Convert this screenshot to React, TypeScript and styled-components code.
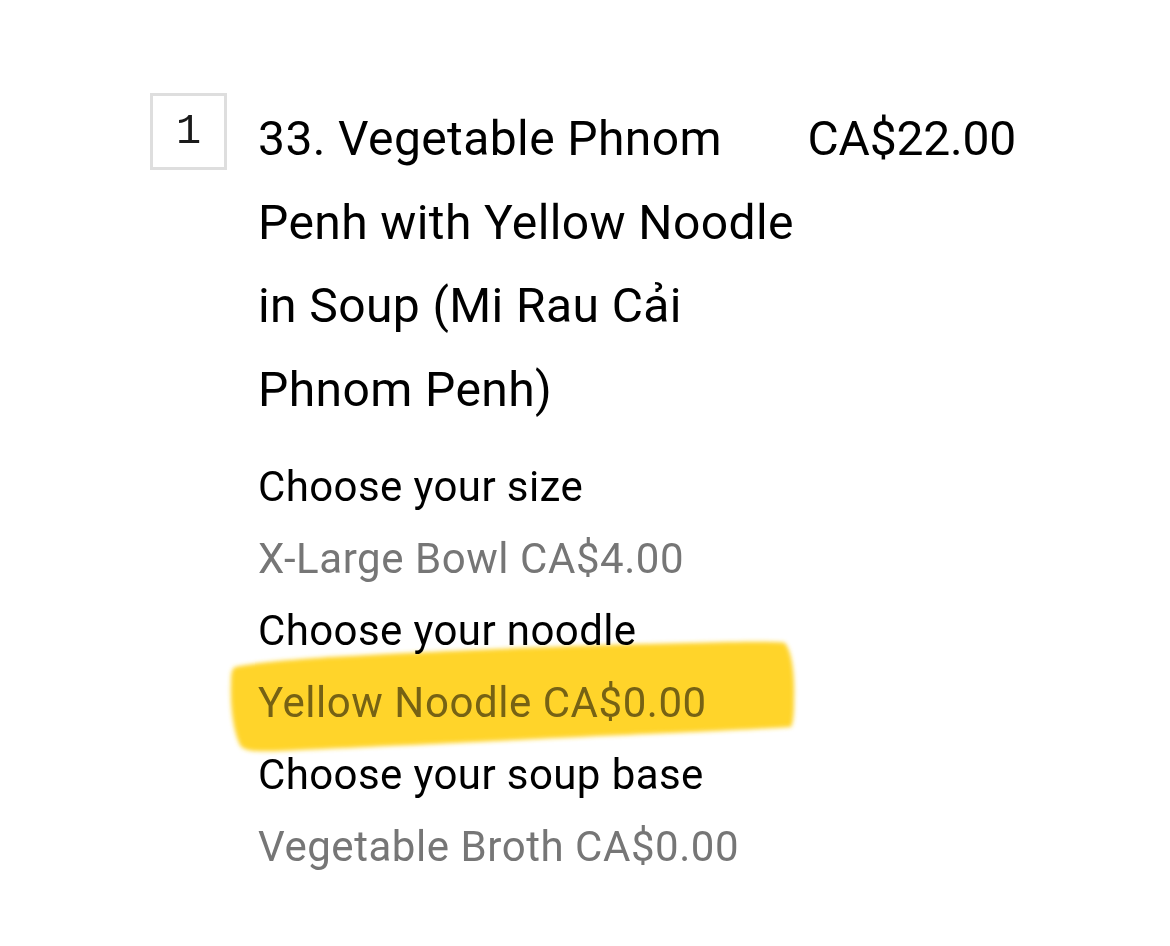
import React from "react";
import styled, { createGlobalStyle } from "styled-components";

const GlobalStyle = createGlobalStyle`
  html, body {
    margin: 0;
    padding: 0;
    background: #ffffff;
  }
  body {
    font-family: Roboto, "Noto Sans", "Liberation Sans", sans-serif;
    color: #000000;
  }
`;

const Page = styled.div`
  width: 1170px;
  height: 946px;
  box-sizing: border-box;
  padding: 93px 0 0 150px;
  background: #ffffff;
`;

const ItemRow = styled.div`
  display: flex;
  align-items: flex-start;
  gap: 31px;
`;

const QtyBox = styled.div`
  width: 77px;
  height: 77px;
  box-sizing: border-box;
  border: 3px solid #dedede;
  display: flex;
  align-items: center;
  justify-content: center;
  font-family: "Liberation Mono", "DejaVu Sans Mono", monospace;
  font-size: 42px;
  color: #1a1a1a;
`;

const Main = styled.div`
  width: 760px;
  display: flex;
  flex-direction: column;
  padding-top: 4px;
`;

const TitleRow = styled.div`
  display: flex;
  justify-content: space-between;
  align-items: flex-start;
`;

const Title = styled.div`
  width: 548px;
  font-size: 48px;
  line-height: 83.5px;
  letter-spacing: 0.4px;
`;

const Price = styled.div`
  font-size: 48px;
  line-height: 83.5px;
  letter-spacing: -0.2px;
  padding-right: 2px;
  white-space: nowrap;
`;

const Options = styled.div`
  margin-top: 20px;
  display: flex;
  flex-direction: column;
`;

const OptionLine = styled.div<{ $muted?: boolean }>`
  position: relative;
  font-size: 42px;
  line-height: 72px;
  letter-spacing: ${(p) => (p.$muted ? "0.55px" : "0.4px")};
  white-space: nowrap;
  color: ${(p) => (p.$muted ? "#767676" : "#000000")};
`;

const Highlight = styled.svg`
  position: absolute;
  left: -39px;
  top: -38px;
  width: 600px;
  height: 140px;
  overflow: visible;
  mix-blend-mode: multiply;
  pointer-events: none;
`;

type Opt = { label: string; value: string; highlight?: boolean };

const options: Opt[] = [
  { label: "Choose your size", value: "X-Large Bowl CA$4.00" },
  { label: "Choose your noodle", value: "Yellow Noodle CA$0.00", highlight: true },
  { label: "Choose your soup base", value: "Vegetable Broth CA$0.00" },
];

function Marker() {
  return (
    <Highlight viewBox="0 0 600 140" aria-hidden="true">
      <defs>
        <filter id="feather" x="-10%" y="-20%" width="120%" height="140%">
          <feGaussianBlur stdDeviation="2.2" />
        </filter>
      </defs>
      <path
        filter="url(#feather)"
        fill="#FFD42C"
        d="M16 38 C40 33 70 31 110 28 C220 22 360 16 470 14 C520 13 555 12 566 14 C574 24 576 50 575 72 C575 86 574 94 572 98 C540 100 470 103 380 107 C280 112 150 118 60 122 C36 123 24 122 21 116 C13 100 11 70 12 52 C12 44 13 40 16 38 Z"
      />
    </Highlight>
  );
}

export default function App() {
  return (
    <>
      <GlobalStyle />
      <Page>
        <ItemRow>
          <QtyBox>1</QtyBox>
          <Main>
            <TitleRow>
              <Title>33. Vegetable Phnom Penh with Yellow Noodle in Soup (Mi Rau Cải Phnom Penh)</Title>
              <Price>CA$22.00</Price>
            </TitleRow>
            <Options>
              {options.map((o) => (
                <React.Fragment key={o.label}>
                  <OptionLine>{o.label}</OptionLine>
                  <OptionLine $muted>
                    {o.value}
                    {o.highlight && <Marker />}
                  </OptionLine>
                </React.Fragment>
              ))}
            </Options>
          </Main>
        </ItemRow>
      </Page>
    </>
  );
}
